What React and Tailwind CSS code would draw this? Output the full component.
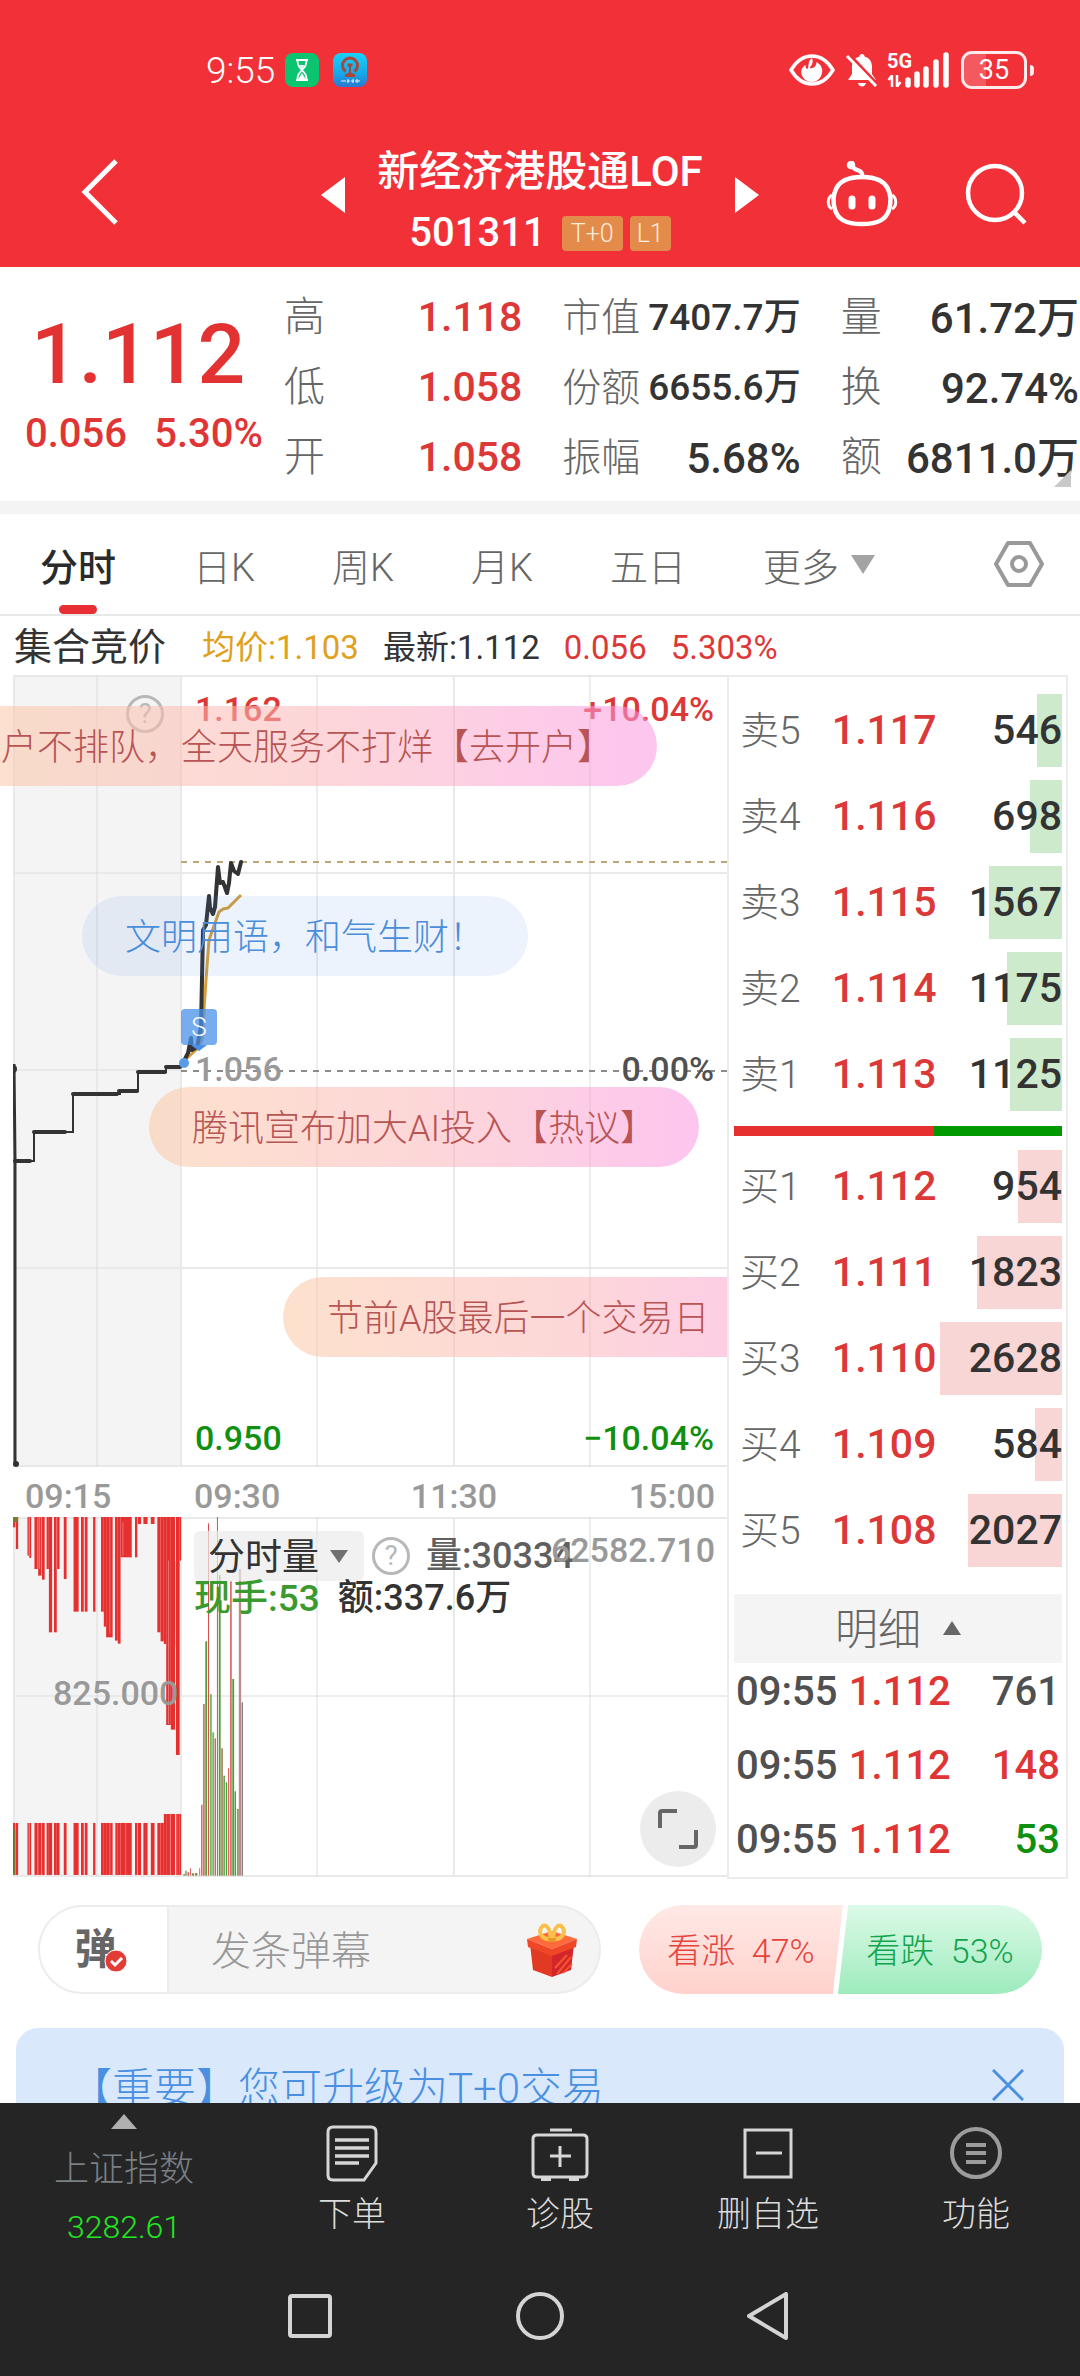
import React from "react";

const SELLS = [
  ["卖", "5", "1.117", 546],
  ["卖", "4", "1.116", 698],
  ["卖", "3", "1.115", 1567],
  ["卖", "2", "1.114", 1175],
  ["卖", "1", "1.113", 1125],
];
const BUYS = [
  ["买", "1", "1.112", 954],
  ["买", "2", "1.111", 1823],
  ["买", "3", "1.110", 2628],
  ["买", "4", "1.109", 584],
  ["买", "5", "1.108", 2027],
];
const MAX_VOLUME = 2628;

const TRADES = [
  ["761", "text-[#505050]"],
  ["148", "text-[#e03535]"],
  ["53", "text-[#109010]"],
];

const QUOTES = [
  ["高", "1.118", true],
  ["市值", "7407.7万", false, true],
  ["量", "61.72万"],
  ["低", "1.058", true],
  ["份额", "6655.6万", false, true],
  ["换", "92.74%"],
  ["开", "1.058", true],
  ["振幅", "5.68%"],
  ["额", "6811.0万"],
];

// [left, right, bottom] of the bars hanging in the auction volume chart
const AUCTION = [
  [28, 33, 145], [34, 39, 210], [59, 62, 230], [63, 67, 237], [74, 81, 270], [82, 89, 290],
  [90, 96, 302], [100, 105, 270], [105, 112, 460], [116, 122, 460], [122, 128, 270], [137, 143, 300],
  [158, 169, 398], [174, 180, 398], [182, 188, 398], [200, 205, 398], [217, 223, 398], [223, 228, 443],
  [228, 242, 475], [247, 253, 485], [253, 259, 494], [259, 283, 235], [290, 295, 235], [296, 303, 135],
  [308, 317, 135], [324, 332, 135], [338, 345, 460], [345, 352, 487], [352, 357, 495], [357, 367, 738],
  [367, 376, 752], [378, 386, 828], [386, 389, 245],
];

// [x, top, colour, width] of the minute volume bars
const VOLUME = [
  [394, 1185, "#7a8a40", 3], [398, 1175, "#7a8a40", 3], [403, 1180, "#c05050", 3], [408, 1168, "#e05050", 2],
  [412, 1183, "#7a8a40", 5], [419, 1182, "#7a8a40", 5], [428, 1168, "#e05050", 2], [432, 977, "#e05a5a", 3],
  [436, 675, "#b58a70", 4], [441, 487, "#5a9a3a", 4], [447, 133, "#d84040", 2], [451, 645, "#6cc060", 4],
  [456, 760, "#78b868", 4], [461, 778, "#d86060", 3], [466, 114, "#d84040", 2], [470, 288, "#5a9a3a", 4],
  [475, 808, "#b58a70", 4], [480, 890, "#4a9a3a", 3], [485, 910, "#4a9a3a", 3], [490, 868, "#e05050", 2],
  [494, 307, "#e07070", 4], [499, 600, "#4aa03a", 4], [504, 937, "#4aa03a", 3], [509, 990, "#8a9a60", 4],
  [513, 270, "#c08a8a", 5], [519, 670, "#808080", 3],
];

function Header() {
  return (
    <header className="bg-[#f13037] text-white">
      <div className="flex h-[140px] items-center justify-between pl-[206px] pr-[46px]">
        <div className="flex items-center">
          <span className="mr-[10px] text-[37px] font-light leading-none">9:55</span>
          <svg className="mr-[14px] size-[34px]" viewBox="0 0 34 34" fill="none">
            <rect width="34" height="34" rx="8" fill="#0bc470" />
            <path d="M11 7h12M11 27h12M12.500 7c0 5 1 6 4.500 10-3.500 4-4.500 5-4.500 10M21.500 7c0 5-1 6-4.500 10 3.500 4 4.500 5 4.500 10" stroke="#fff" strokeWidth="1.800" />
            <path d="M14.500 12h5l-2.500 3.500zM17 20l3.500 6h-7z" fill="#fff" />
          </svg>
          <svg className="size-[34px]" viewBox="0 0 34 34" fill="none">
            <defs>
              <linearGradient id="rail" x1="0" y1="0" x2="0" y2="1">
                <stop stopColor="#19d1fb" />
                <stop offset="0.600" stopColor="#16a8e8" />
                <stop offset="1" stopColor="#2b78cf" />
              </linearGradient>
            </defs>
            <rect width="34" height="34" rx="8" fill="url(#rail)" />
            <path d="M12.500 18.500a7.500 7.500 0 1 1 9 0" stroke="#a8483a" strokeWidth="3" />
            <path d="M14.500 10.500h5v3h-1.500v6l4 2v2.500H12v-2.500l4-2v-6h-1.500z" fill="#a8483a" />
            <path d="M8 28h5M14 28h3M18 28h3M22 28h5M15 26v4M20 26v4M24 26v4" stroke="#e8f4ff" strokeWidth="1" />
          </svg>
        </div>
        <div className="flex items-center">
          <svg className="mr-[10px] h-[34px] w-[46px]" viewBox="0 0 46 34" fill="none">
            <path d="M2 17C8 7 15 3 23 3s15 4 21 14c-6 10-13 14-21 14S8 27 2 17z" stroke="#fff" strokeWidth="3.500" />
            <path d="M23 5c2 5-1 8-2.500 10 4 1 7-2 7-6 5 3 7 7 5 13-2 5-6 7-10 7s-9-3-10-8c-1-4 1-7 4-9 0 3 1 4 2 4 2-4 0-8 4.500-11z" fill="#fff" />
          </svg>
          <svg className="mr-[8px] h-[36px] w-[34px]" viewBox="0 0 34 36" fill="none">
            <path d="M17 2c1.500 0 2.500 1 2.500 2.500C25 6 27 10 27 15v7l4 6H3l4-6v-7c0-5 2-9 7.500-10.500C14.500 3 15.500 2 17 2z" fill="#fff" />
            <path d="M13 31h8c-.5 2-2 3.500-4 3.500S13.500 33 13 31z" fill="#fff" />
            <path d="M4 2l29 31" stroke="#f13037" strokeWidth="3" />
            <path d="M2 4l29 30" stroke="#fff" strokeWidth="3" />
          </svg>
          <div className="relative mr-[12px] h-[38px] w-[62px]">
            <span className="absolute left-0 top-0 text-[20px] font-bold leading-[20px]">5G</span>
            <svg className="size-full" viewBox="0 0 62 38" fill="none" stroke="#fff">
              <path d="M5 24v12M4.500 25l-3 4M10 24v12M10.500 35l3-4" strokeWidth="2.500" />
              <path d="M21 29v5M30 23v11M39 18v16M49 11v23M59 4v30" strokeWidth="5.500" strokeLinecap="round" />
            </svg>
          </div>
          <div className="relative mr-[3px] flex h-[38px] w-[66px] items-center justify-center overflow-hidden rounded-[11px] border-[3px] border-white/90">
            <span className="absolute inset-y-0 left-0 w-[36%] bg-white/20" />
            <span className="relative text-[27px] leading-none">35</span>
          </div>
          <span className="h-[11px] w-[4px] rounded-r bg-white/90" />
        </div>
      </div>
      <nav className="grid h-[127px] grid-cols-[1fr_auto_1fr] items-start">
        <button aria-label="返回" className="flex h-[104px] w-[120px] items-center pl-[80px]">
          <svg className="h-[68px] w-[40px] shrink-0" viewBox="0 0 40 68" fill="none" stroke="#fff" strokeWidth="5">
            <path d="M36 3L5 34l31 31" />
          </svg>
        </button>
        <div className="flex w-[438px] items-start justify-between">
          <button aria-label="上一个" className="flex h-[110px] items-center">
            <svg className="h-[36px] w-[24px]" viewBox="0 0 24 36" fill="#fff"><path d="M24 0v36L0 18z" /></svg>
          </button>
          <div className="flex flex-col items-center">
            <h1 className="h-[64px] text-[42px] font-medium leading-[64px]">新经济港股通LOF</h1>
            <div className="flex h-[58px] items-center gap-[7px]">
              <span className="mr-[9px] text-[40px] font-medium leading-none">501311</span>
              <span className="rounded-[4px] bg-[#e28b4a] px-[9px] text-[25px] font-light leading-[35px] text-[#ffeedd]">T+0</span>
              <span className="rounded-[4px] bg-[#e28b4a] px-[7px] text-[25px] font-light leading-[35px] text-[#ffeedd]">L1</span>
            </div>
          </div>
          <button aria-label="下一个" className="flex h-[110px] items-center">
            <svg className="h-[36px] w-[24px]" viewBox="0 0 24 36" fill="#fff"><path d="M0 0v36l24-18z" /></svg>
          </button>
        </div>
        <div className="flex h-[108px] items-center justify-end gap-[66px] pr-[52px]">
          <button aria-label="助手">
            <svg className="h-[66px] w-[72px]" viewBox="0 0 72 66" fill="none" stroke="#fff" strokeWidth="4.500">
              <path d="M36 16c13 0 22 3 26 12 3 6 3 14 1 21-3 9-10 14-27 14S12 58 9 49c-2-7-2-15 1-21 4-9 13-12 26-12z" />
              <path d="M36 16c1-6-3-6-7-8-3-2-4-5-3-6" strokeLinecap="round" />
              <circle cx="25" cy="4" r="2" fill="#fff" />
              <path d="M6 34c-5 3-5 11 0 14M66 34c5 3 5 11 0 14" strokeWidth="3" />
              <path d="M26 38v7M46 38v7" strokeWidth="7" strokeLinecap="round" />
            </svg>
          </button>
          <button aria-label="搜索">
            <svg className="h-[64px] w-[64px]" viewBox="0 0 64 64" fill="none" stroke="#fff" strokeWidth="4.500">
              <circle cx="31" cy="31" r="27" />
              <path d="M50 50l11 11" />
            </svg>
          </button>
        </div>
      </nav>
    </header>
  );
}

function Quote() {
  return (
    <section className="relative flex border-b-[13px] border-[#f4f4f4] bg-white pb-2 pt-4 font-medium">
      <div className="w-[263px] pl-[25px] pt-[24px] text-[#e03535]">
        <div className="whitespace-nowrap pl-[6px] text-[84px] leading-[96px] text-[#e33232]">1.112</div>
        <div className="flex justify-between text-[40px] leading-[62px]">
          <span>0.056</span>
          <span>5.30%</span>
        </div>
      </div>
      <dl className="grid flex-1 grid-cols-3 gap-x-10 pl-[21px] pr-px">
        {QUOTES.map(([label, value, up, small]) => (
          <div key={label} className="flex h-[70px] items-center justify-between whitespace-nowrap">
            <dt className={label.length > 1 ? "text-[39px] font-light text-[#666]" : "text-[41px] font-light text-[#666]"}>{label}</dt>
            <dd className={up ? "text-[41px] text-[#dc3838]" : small ? "text-[37px] text-[#333]" : "text-[42px] text-[#333]"}>{value}</dd>
          </div>
        ))}
      </dl>
      <svg className="absolute bottom-[14px] right-[9px] size-[17px]" viewBox="0 0 17 17" fill="#c8c8c8"><path d="M17 0v17H0z" /></svg>
    </section>
  );
}

function Tabs() {
  return (
    <nav className="flex h-[102px] items-stretch border-b-2 border-[#e8e8e8] pl-[40px] pr-[36px] text-[38px] font-light text-[#666]">
      <div className="flex gap-[77px]">
        <button className="relative pt-[8px] font-medium text-[#2a2a2a]">
          分时
          <span className="absolute bottom-0 left-1/2 h-[9px] w-[38px] -translate-x-1/2 rounded-full bg-[#e62e33]" />
        </button>
        {["日K", "周K", "月K", "五日"].map((t) => (
          <button key={t} className="pt-[8px]">{t}</button>
        ))}
        <button className="flex items-center gap-[12px] pt-[8px]">
          更多
          <svg className="mb-[8px] h-[19px] w-[24px]" viewBox="0 0 24 19" fill="#a3a3a3"><path d="M0 0h24L12 19z" /></svg>
        </button>
      </div>
      <button aria-label="设置" className="ml-auto">
        <svg className="h-[48px] w-[50px]" viewBox="0 0 50 48" fill="none" stroke="#999" strokeWidth="4" strokeLinejoin="round">
          <path d="M14 3h22l12 21-12 21H14L2 24z" />
          <circle cx="25" cy="24" r="7" />
        </svg>
      </button>
    </nav>
  );
}

function Danmu({ className, children }) {
  return (
    <div className={"absolute flex h-[80px] items-center whitespace-nowrap rounded-full pt-[4px] text-[36px] font-light " + className}>
      {children}
    </div>
  );
}

const HOT = "bg-linear-to-r from-[#fbc8a4]/55 via-[#fbb6b8]/55 to-[#fb96e2]/55 text-[#b85454]";

function PriceChart() {
  return (
    <div className="relative h-[792px] text-[34px] font-medium leading-none text-[#999]">
      <svg className="size-full" viewBox="0 0 714 792" preserveAspectRatio="none" fill="none">
        <rect width="168" height="792" fill="#f4f4f4" />
        <path d="M0 1h714M0 198h714M0 593h714M0 791h714M1 0v792M168 0v792M441 0v792" stroke="#e9e9e9" strokeWidth="2" />
        <path d="M84 0v792M304 0v792M577 0v792M0 395h168" stroke="#dcdcdc" strokeWidth="1" />
        <path d="M168 187h546" stroke="#bda778" strokeWidth="2" strokeDasharray="6 6" />
        <path d="M168 396h546" stroke="#8c8c8c" strokeWidth="2" strokeDasharray="6 6" />
        <path d="M172 385L184 374 189 365 193 305 196 265 202 248 206 237 210 234 215 233 222 226 228 220" stroke="#d69e3a" strokeWidth="3" strokeLinejoin="round" />
        <path d="M1 389l1 97v304" stroke="#333" strokeWidth="3" />
        <path d="M2 486h19v-29h39v-38h47v-3h18v-19h28v-5h14l4-5" stroke="#333" strokeWidth="2" />
        <path d="M2 486h16M21 457h32M60 419h44M106 416h18M125 397h27M153 392h14" stroke="#333" strokeWidth="4" strokeDasharray="7 1" strokeLinecap="round" />
        <circle cx="0" cy="394" r="4" fill="#333" />
        <circle cx="3" cy="789" r="3" fill="#333" />
        <path d="M170 388L175 378 178 363 179 375 184 372 188 352 190 255 193 250 196 221 197 233 200 239 202 232 205 192 207 208 210 207 214 218 216 208 218 188 221 196 225 199 228 187" stroke="#333" strokeWidth="4" strokeLinejoin="round" strokeLinecap="round" />
        <circle cx="171" cy="388" r="5" fill="#5a9be8" />
      </svg>
      <span className="absolute left-[182px] top-[17px] text-[#dc3838]">1.162</span>
      <span className="absolute right-[13px] top-[17px] text-[#dc3838]">+10.04%</span>
      <span className="absolute left-[182px] top-[377px]">1.056</span>
      <span className="absolute right-[13px] top-[377px] text-[#505050]">0.00%</span>
      <span className="absolute left-[182px] top-[746px] text-[#109010]">0.950</span>
      <span className="absolute right-[13px] top-[746px] text-[#109010]">−10.04%</span>
      <span className="absolute left-[113px] top-[20px] flex size-[38px] items-center justify-center rounded-full border-[3px] border-[#b8b8b8] text-[28px] font-normal text-[#b8b8b8]">?</span>
      <div className="absolute left-[168px] top-[334px] flex h-[36px] w-[36px] items-center justify-center rounded-[4px] bg-[#4a90e8]/75 text-[26px] font-light text-white">
        S
        <svg className="absolute left-[10px] top-[36px] h-[6px] w-[16px]" viewBox="0 0 16 6" fill="#4a90e8"><path d="M0 0h16L8 6z" /></svg>
      </div>
      <div className="absolute inset-y-0 -left-[13px] right-0 overflow-hidden">
        <Danmu className={"right-[70px] top-[31px] pl-[40px] pr-[44px] " + HOT}>户不排队，全天服务不打烊【去开户】</Danmu>
        <Danmu className="left-[82px] top-[221px] bg-[#468cf0]/10 px-[43px] text-[#4a8ddb]">文明用语，和气生财！</Danmu>
        <Danmu className={"left-[149px] top-[412px] px-[43px] " + HOT}>腾讯宣布加大AI投入【热议】</Danmu>
        <Danmu className={"left-[283px] top-[602px] w-[580px] px-[44px] " + HOT}>节前A股最后一个交易日</Danmu>
      </div>
    </div>
  );
}

function VolumeChart() {
  return (
    <div className="relative h-[360px] text-[36px] font-medium leading-none text-[#333]">
      <svg className="size-full" viewBox="0 0 714 360" preserveAspectRatio="none" fill="none">
        <rect width="168" height="360" fill="#f4f4f4" />
        <path d="M0 1h714M0 359h714M1 0v360M168 0v360M441 0v360M0 179h168" stroke="#e9e9e9" strokeWidth="2" />
        <path d="M84 0v360M304 0v360M577 0v360M168 179h546" stroke="#dcdcdc" strokeWidth="1" />
        <g transform="translate(-13 -38) scale(0.4655 0.3333)">
          {AUCTION.map(([l, r, b]) => (
            <g key={l} fill="#e63030">
              <rect x={l} y="114" width={r - l} height={b - 114} />
              <rect x={l} y={l > 350 ? 1005 : 1032} width={r - l} height={l > 350 ? 183 : 156} />
            </g>
          ))}
          <path d="M28 114h11v16H28zM30 1050h3v138h-3z" fill="#7d7a30" />
          <path d="M377 245v260M362 245v490M85 114v156M264 130v100M236 114v350M122 114v156M270 1032v156M366 1005v183M380 1005v183M248 1032v156M236 1032v156" stroke="#f4a0a0" strokeWidth="1.500" />
          {VOLUME.map(([x, top, color, w]) => (
            <rect key={x} x={x} y={top} width={w} height={1190 - top} fill={color} />
          ))}
        </g>
      </svg>
      <div className="absolute left-[181px] top-[14px] flex items-center">
        <div className="relative h-[50px] w-[170px] rounded-[6px] bg-[#ebebeb]/70">
          <select aria-label="指标" className="size-full appearance-none bg-transparent pl-[14px] pt-[3px] text-[37px] font-normal">
            <option>分时量</option>
          </select>
          <svg className="pointer-events-none absolute right-[16px] top-[19px] h-[13px] w-[18px]" viewBox="0 0 18 13" fill="#707070"><path d="M0 0h18l-9 13z" /></svg>
        </div>
        <span className="ml-[8px] flex size-[38px] items-center justify-center rounded-full border-[3px] border-[#b8b8b8] text-[28px] font-normal text-[#b8b8b8]">?</span>
        <span className="ml-[16px] text-[#606060]">量:30334</span>
      </div>
      <span className="absolute right-[12px] top-[16px] text-[34px] text-[#999]">62582.710</span>
      <span className="absolute left-[181px] top-[63px] flex gap-[18px]">
        <span className="text-[37px] text-[#3a9a30]">现手:53</span>
        <span>额:337.6万</span>
      </span>
      <span className="absolute left-[40px] top-[159px] text-[34px] text-[#999]">825.000</span>
      <button aria-label="全屏" className="absolute bottom-[10px] right-[11px] flex size-[76px] items-center justify-center rounded-full bg-[#ececec]">
        <svg className="size-[42px]" viewBox="0 0 42 42" fill="none" stroke="#666" strokeWidth="4">
          <path d="M3 20V5a2 2 0 0 1 2-2h15M39 22v15a2 2 0 0 1-2 2H22" />
        </svg>
      </button>
    </div>
  );
}

function Book({ rows, bar }) {
  return (
    <table className="w-full table-fixed">
      <tbody>
        {rows.map(([side, n, price, volume]) => (
          <tr key={side + n} className="h-[86px]">
            <th scope="row" className="w-[28%] pl-[6px] text-left text-[39px] font-light text-[#666]">{side}{n}</th>
            <td className="w-[34%] pl-[6px] text-[41px] text-[#dc3838]">{price}</td>
            <td className="relative text-right text-[41px] text-[#333]">
              <span className={"absolute right-0 top-[6px] h-[73px] " + bar} style={{ width: `${(volume / MAX_VOLUME) * 98}%` }} />
              <span className="relative">{volume}</span>
            </td>
          </tr>
        ))}
      </tbody>
    </table>
  );
}

function OrderBook() {
  return (
    <aside className="border-2 border-[#ececec] pl-[5px] pr-[4px] pt-[11px] font-medium">
      <Book rows={SELLS} bar="bg-[#cdeacd]" />
      <div className="my-[8px] flex h-[10px] bg-[#009a00]">
        <span className="w-[61%] bg-[#e63030]" />
      </div>
      <Book rows={BUYS} bar="bg-[#f9d6d6]" />
      <button className="mt-[20px] flex h-[69px] w-full items-center justify-center gap-[22px] bg-[#f4f4f4] pt-[4px] text-[43px] font-light leading-none text-[#666]">
        明细
        <svg className="mb-[6px] h-[14px] w-[18px]" viewBox="0 0 18 14" fill="#666"><path d="M0 14h18L9 0z" /></svg>
      </button>
      <table className="-mt-[8px] w-full table-fixed text-[40px]">
        <tbody>
          {TRADES.map(([volume, color]) => (
            <tr key={volume} className="h-[74px]">
              <td className="w-[35%] pl-[2px] text-[#505050]">09:55</td>
              <td className="w-[31%] text-[#e03535]">1.112</td>
              <td className={"pr-[2px] text-right " + color}>{volume}</td>
            </tr>
          ))}
        </tbody>
      </table>
    </aside>
  );
}

function Actions() {
  return (
    <div className="mt-[26px] flex h-[89px] justify-between pl-[38px] pr-[38px]">
      <form className="flex w-[563px] items-center overflow-hidden rounded-full border-2 border-[#ececec] bg-[#f4f4f4]">
        <button type="button" className="relative h-full w-[129px] shrink-0 border-r-2 border-[#ececec] bg-white pr-[16px] text-[42px] font-bold leading-none text-[#666]">
          弹
          <svg className="absolute left-[64px] top-[42px] size-[24px]" viewBox="0 0 24 24" fill="none">
            <circle cx="12" cy="12" r="11" fill="#e23c36" stroke="#fff" />
            <path d="M7 12l4 4 7-7" stroke="#fff" strokeWidth="3" />
          </svg>
        </button>
        <input aria-label="发条弹幕" placeholder="发条弹幕" className="min-w-0 flex-1 bg-transparent pl-[42px] pt-[4px] text-[40px] font-light placeholder:text-[#999]" />
        <svg className="mr-[20px] h-[56px] w-[54px]" viewBox="0 0 54 56" fill="none">
          <path d="M5 22l22 8v25L8 48z" fill="#e23a22" />
          <path d="M49 22l-22 8v25l19-7z" fill="#d3252c" />
          <path d="M2 17l25-8 25 8-25 10z" fill="#ff6a3c" />
          <path d="M2 17l25 10v7L3 25zM52 17L27 27v7l24-9z" fill="#ef4628" />
          <path d="M32 52l14-17M30 46l12-13M38 51l9-9" stroke="#f2552e" strokeWidth="2" />
          <path d="M26 17C18 18 13 12 16 6c4-6 9-1 10 11zM28 17c8 1 13-5 10-11-4-6-9-1-10 11z" stroke="#f9c14c" strokeWidth="4" />
          <path d="M23 16h8v4h-8z" fill="#e89a28" />
        </svg>
      </form>
      <div className="flex w-[403px] overflow-hidden rounded-full text-[34px] font-light">
        <button className="w-[204px] bg-linear-to-b from-[#ffe9e6] to-[#ffd2cc] pt-[3px] text-[#e5443c] [clip-path:polygon(0_0,100%_0,95%_100%,0_100%)]">看涨&nbsp; 47%</button>
        <button className="-ml-[5px] w-[204px] bg-linear-to-b from-[#dcfae8] to-[#9debbd] pt-[3px] text-[#12a44e] [clip-path:polygon(5%_0,100%_0,100%_100%,0_100%)]">看跌&nbsp; 53%</button>
      </div>
    </div>
  );
}

function Notice() {
  return (
    <div className="mx-[16px] mt-[34px] flex h-[120px] items-start justify-between rounded-t-[22px] bg-[#dae8fb] pl-[54px] pr-[40px] pt-[36px] text-[42px] font-light leading-[50px] text-[#4a90e2]">
      <span>【重要】您可升级为T+0交易</span>
      <button aria-label="关闭" className="pt-[5px]">
        <svg className="size-[32px]" viewBox="0 0 32 32" fill="none" stroke="#4a90e2" strokeWidth="3"><path d="M1 1l30 30M31 1L1 31" /></svg>
      </button>
    </div>
  );
}

function NavItem({ label, children }) {
  return (
    <button className="flex flex-1 flex-col items-center pt-[20px] text-[34px] font-light text-[#dcdcdc]">
      <svg className="size-[60px]" viewBox="0 0 60 60" fill="none" stroke="#d6d6d6" strokeWidth="3">{children}</svg>
      <span className="mt-[6px] leading-[50px]">{label}</span>
    </button>
  );
}

function BottomBar() {
  return (
    <footer className="shrink-0 bg-[#252525]">
      <div className="flex h-[154px]">
        <button className="flex w-[248px] flex-col items-center pt-[11px] font-light">
          <svg className="h-[15px] w-[26px]" viewBox="0 0 26 15" fill="#b0b0b0"><path d="M0 15h26L13 0z" /></svg>
          <span className="mt-[16px] text-[35px] leading-[50px] text-[#7a8084]">上证指数</span>
          <span className="mt-[10px] text-[32px] leading-[44px] text-[#22e622]">3282.61</span>
        </button>
        <NavItem label="下单">
          <path d="M11 4h38q5 0 5 5v31L42 57H11q-5 0-5-5V9q0-5 5-5z" />
          <path d="M13 17h34M13 25h34M13 33h34M13 40h24" strokeWidth="3.500" />
        </NavItem>
        <NavItem label="诊股">
          <path d="M7 12h46q4 0 4 4v34q0 4-4 4H7q-4 0-4-4V16q0-4 4-4zM20 7h22M30 23v21M20 33h21" />
          <path d="M11 56h10M39 56h10" strokeWidth="4" />
        </NavItem>
        <NavItem label="删自选">
          <path d="M7 7h46v47H7zM18 30h26" />
        </NavItem>
        <NavItem label="功能">
          <g stroke="#9c9c9c" strokeWidth="4">
            <circle cx="30" cy="30" r="24" />
            <path d="M20 22h20M20 30h20M20 39h20" />
          </g>
        </NavItem>
      </div>
      <div className="flex h-[119px] items-start justify-center gap-[182px] pt-[35px]">
        <button aria-label="最近">
          <svg className="size-[48px]" viewBox="0 0 48 48" fill="none" stroke="#d4d4d4" strokeWidth="4"><rect x="4" y="4" width="40" height="40" rx="2" /></svg>
        </button>
        <button aria-label="主页">
          <svg className="size-[48px]" viewBox="0 0 48 48" fill="none" stroke="#d4d4d4" strokeWidth="4"><circle cx="24" cy="24" r="22" /></svg>
        </button>
        <button aria-label="后退">
          <svg className="size-[48px]" viewBox="0 0 48 48" fill="none" stroke="#d4d4d4" strokeWidth="4" strokeLinejoin="round"><path d="M40 2v44L3 24z" /></svg>
        </button>
      </div>
    </footer>
  );
}

export default function App() {
  return (
    <div className="flex h-screen flex-col overflow-hidden bg-white font-[Roboto,'Noto_Sans_CJK_SC',sans-serif]">
      <Header />
      <main className="min-h-0 flex-1 overflow-hidden">
        <Quote />
        <Tabs />
        <div className="flex h-[59px] items-center whitespace-nowrap pl-[14px] pt-[4px] text-[33px] font-medium text-[#dc3838]">
          <span className="mr-[36px] text-[38px] font-normal text-[#333]">集合竞价</span>
          <span className="mr-[24px] font-normal text-[#e0a020]">均价:1.103</span>
          <span className="mr-[24px] font-normal text-[#333]">最新:1.112</span>
          <span className="mr-[24px] font-normal">0.056</span>
          <span className="font-normal">5.303%</span>
        </div>
        <div className="grid grid-cols-[minmax(0,714fr)_minmax(0,341fr)] pl-[13px] pr-[12px]">
          <div>
            <PriceChart />
            <div className="grid h-[50px] grid-cols-[168px_1fr_1fr_1fr] items-center pt-[4px] text-[34px] font-medium text-[#999]">
              <span className="pl-[12px]">09:15</span>
              <span className="pl-[13px]">09:30</span>
              <span className="text-center">11:30</span>
              <span className="pr-[12px] text-right">15:00</span>
            </div>
            <VolumeChart />
          </div>
          <OrderBook />
        </div>
        <Actions />
        <Notice />
      </main>
      <BottomBar />
    </div>
  );
}
